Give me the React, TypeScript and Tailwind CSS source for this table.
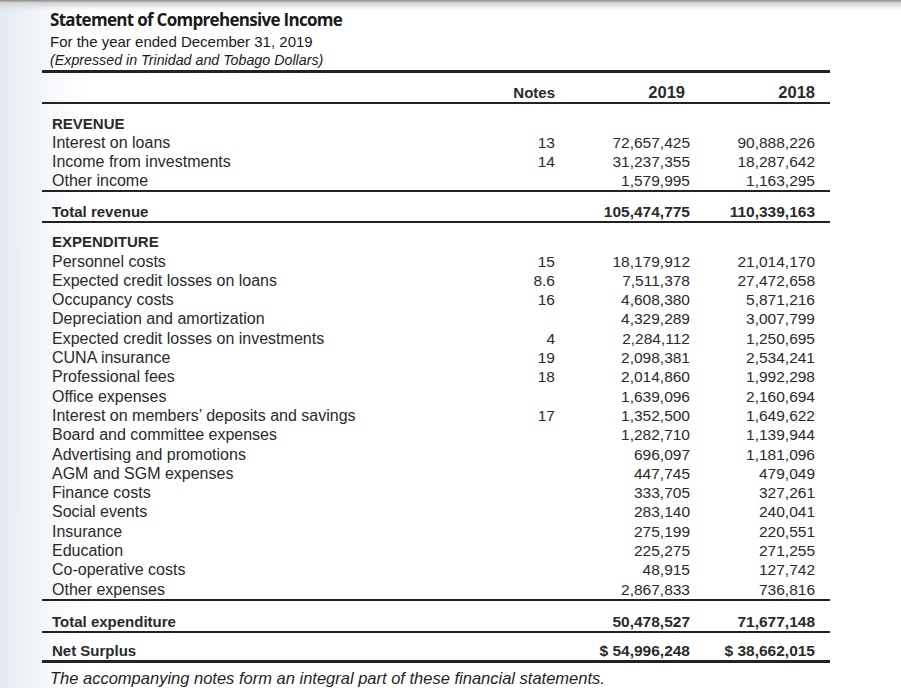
import React from "react"

type Line = [string, string, string, string]

const revenue: Line[] = [
    ["Interest on loans", "13", "72,657,425", "90,888,226"],
    ["Income from investments", "14", "31,237,355", "18,287,642"],
    ["Other income", "", "1,579,995", "1,163,295"],
]

const expenditure: Line[] = [
    ["Personnel costs", "15", "18,179,912", "21,014,170"],
    ["Expected credit losses on loans", "8.6", "7,511,378", "27,472,658"],
    ["Occupancy costs", "16", "4,608,380", "5,871,216"],
    ["Depreciation and amortization", "", "4,329,289", "3,007,799"],
    ["Expected credit losses on investments", "4", "2,284,112", "1,250,695"],
    ["CUNA insurance", "19", "2,098,381", "2,534,241"],
    ["Professional fees", "18", "2,014,860", "1,992,298"],
    ["Office expenses", "", "1,639,096", "2,160,694"],
    ["Interest on members’ deposits and savings", "17", "1,352,500", "1,649,622"],
    ["Board and committee expenses", "", "1,282,710", "1,139,944"],
    ["Advertising and promotions", "", "696,097", "1,181,096"],
    ["AGM and SGM expenses", "", "447,745", "479,049"],
    ["Finance costs", "", "333,705", "327,261"],
    ["Social events", "", "283,140", "240,041"],
    ["Insurance", "", "275,199", "220,551"],
    ["Education", "", "225,275", "271,255"],
    ["Co-operative costs", "", "48,915", "127,742"],
    ["Other expenses", "", "2,867,833", "736,816"],
]

const grid = "grid grid-cols-[1fr_60px_135px_125px] pl-[10px] pr-[15px] items-baseline"

const Row = ({ line, lh }: { line: Line; lh: string }) => (
    <div className={`${grid} ${lh}`}>
        <span className="text-[16px]">{line[0]}</span>
        <span className="text-right text-[15.5px]">{line[1]}</span>
        <span className="text-right text-[15.5px]">{line[2]}</span>
        <span className="text-right text-[15.5px]">{line[3]}</span>
    </div>
)

const TotalRow = ({ label, a, b, h }: { label: string; a: string; b: string; h: string }) => (
    <div className={`flex items-end ${h}`}>
        <div className={`${grid} w-full leading-[18px] font-bold`}>
            <span className="text-[15px]">{label}</span>
            <span />
            <span className="text-right text-[15.5px]">{a}</span>
            <span className="text-right text-[15.5px]">{b}</span>
        </div>
    </div>
)

export default function App() {
    return (
        <div className="w-[901px] h-[688px] overflow-hidden text-[#2a2a2a] font-['Liberation_Sans',Arial,sans-serif] bg-[linear-gradient(180deg,#8c8c8c_0px,#d6d6d6_3px,rgba(255,255,255,0)_10px),linear-gradient(90deg,#e2e9f1_0px,#f3f6f9_40px,#ffffff_90px)]">
            <div className="pl-[50px] pt-[9px] text-[#1a1a1a]">
                <div className="font-['Open_Sans',sans-serif] text-[17px] leading-[22px] font-bold tracking-[-0.7px]">
                    Statement of Comprehensive Income
                </div>
                <div className="text-[15px] leading-[21px]">
                    For the year ended December 31, 2019
                </div>
                <div className="text-[14.25px] leading-[16px] italic">
                    (Expressed in Trinidad and Tobago Dollars)
                </div>
            </div>

            <div className="ml-[42px] w-[788px]">
                <div className="mt-[2px] h-[3px] bg-[#222]" />

                <div className="flex items-end h-[29px]">
                    <div className={`${grid} w-full leading-[18px] font-bold`}>
                        <span />
                        <span className="text-right text-[15px]">Notes</span>
                        <span className="text-right text-[16.5px] pr-[5px]">2019</span>
                        <span className="text-right text-[16.5px]">2018</span>
                    </div>
                </div>
                <div className="h-[2px] bg-[#222]" />

                <div className="mt-[10px]">
                    <div className={`${grid} leading-[19px]`}>
                        <span className="text-[15px] font-bold">REVENUE</span>
                    </div>
                    {revenue.map((r) => (
                        <Row key={r[0]} line={r} lh="leading-[19px]" />
                    ))}
                </div>
                <div className="h-[2px] bg-[#222]" />

                <TotalRow label="Total revenue" a="105,474,775" b="110,339,163" h="h-[29px]" />
                <div className="h-[2px] bg-[#222]" />

                <div className="mt-[9.4px]">
                    <div className={`${grid} leading-[19.2px]`}>
                        <span className="text-[15px] font-bold">EXPENDITURE</span>
                    </div>
                    {expenditure.map((r) => (
                        <Row key={r[0]} line={r} lh="leading-[19.3px]" />
                    ))}
                </div>
                <div className="h-[2px] bg-[#222]" />

                <TotalRow label="Total expenditure" a="50,478,527" b="71,677,148" h="h-[30px]" />
                <div className="h-[2px] bg-[#222]" />

                <TotalRow label="Net Surplus" a="$ 54,996,248" b="$ 38,662,015" h="h-[27px]" />
                <div className="h-[3px] bg-[#222]" />
            </div>

            <div className="pl-[50px] mt-[5px] text-[16.5px] leading-[20px] italic text-[#1f1f1f]">
                The accompanying notes form an integral part of these financial statements.
            </div>
        </div>
    )
}
